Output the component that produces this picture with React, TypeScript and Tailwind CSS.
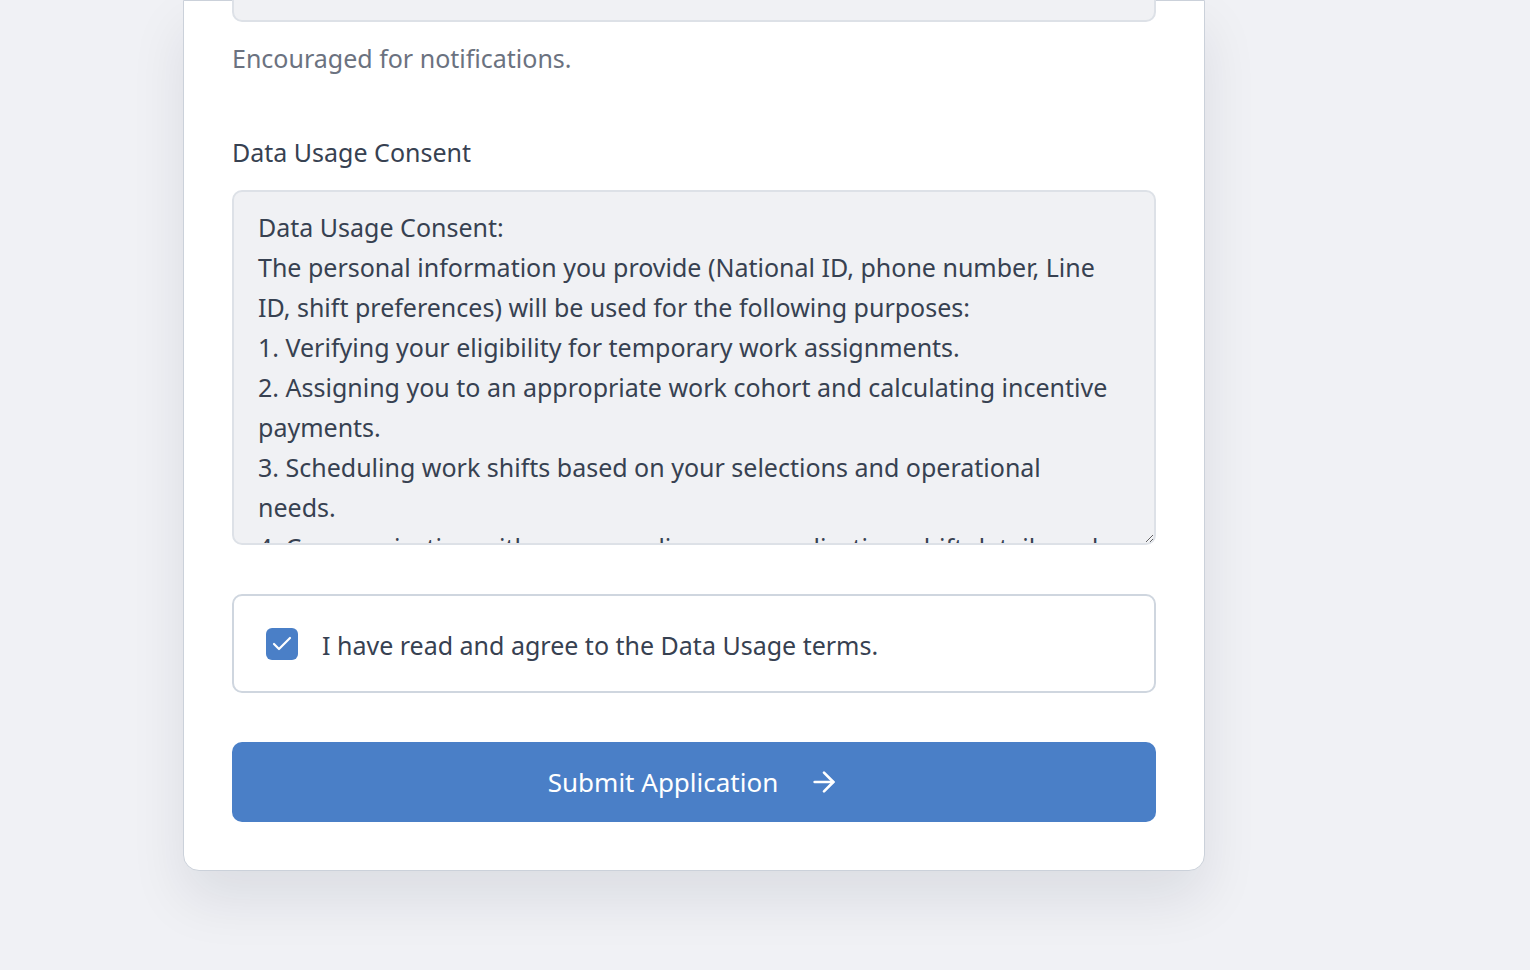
import { ArrowRight, Check } from "lucide-react";

const consentText = `Data Usage Consent:
The personal information you provide (National ID, phone number, Line ID, shift preferences) will be used for the following purposes:
1. Verifying your eligibility for temporary work assignments.
2. Assigning you to an appropriate work cohort and calculating incentive payments.
3. Scheduling work shifts based on your selections and operational needs.
4. Communicating with you regarding your application, shift details and payments.
Your data will be stored securely and will not be shared with third parties without your consent.`;

const App = () => {
    return (
        <div
            className="min-h-screen bg-[#f0f1f5] pl-[183px] pb-[100px] overflow-hidden"
            style={{ fontFamily: '"Noto Sans", "Open Sans", sans-serif' }}>
            <div
                className="w-[1022px] bg-white border border-[#cbd1da] rounded-b-[16px]
                shadow-[0_28px_56px_rgba(15,23,42,0.09)] px-[48px] pb-[48px]">
                <div className="h-[60px] mt-[-39px] rounded-[10px] bg-[#f0f1f4] border-2 border-[#dde1e7]" />
                <p className="mt-[18px] text-[25px] leading-[36px] text-[#6b7280]">
                    Encouraged for notifications.
                </p>

                <label className="block mt-[58px] text-[25px] leading-[36px] text-[#374151]">
                    Data Usage Consent
                </label>
                <textarea
                    readOnly
                    defaultValue={consentText}
                    className="block w-full mt-[20px] h-[355px] rounded-[10px] bg-[#f0f1f4] border-2 border-[#dde1e7]
                    pl-[24px] pr-[40px] py-[15px] text-[25px] leading-[40px] text-[#374151] resize-y overflow-hidden outline-none"
                />

                <div className="mt-[49px] h-[99px] rounded-[10px] border-2 border-[#cfd6df] flex items-center gap-[24px] pl-[32px]">
                    <span className="w-[32px] h-[32px] rounded-[6px] bg-[#4a7fc7] flex items-center justify-center">
                        <Check size={24} strokeWidth={2.2} color="white" />
                    </span>
                    <span className="text-[25px] text-[#374151] pt-[4px]">
                        I have read and agree to the Data Usage terms.
                    </span>
                </div>

                <button
                    className="mt-[49px] w-full h-[80px] rounded-[10px] bg-[#4a7fc7] text-white
                    flex items-center justify-center gap-[30px] text-[26px]">
                    <span>Submit Application</span>
                    <ArrowRight size={32} strokeWidth={2} />
                </button>
            </div>
        </div>
    );
};

export default App;
